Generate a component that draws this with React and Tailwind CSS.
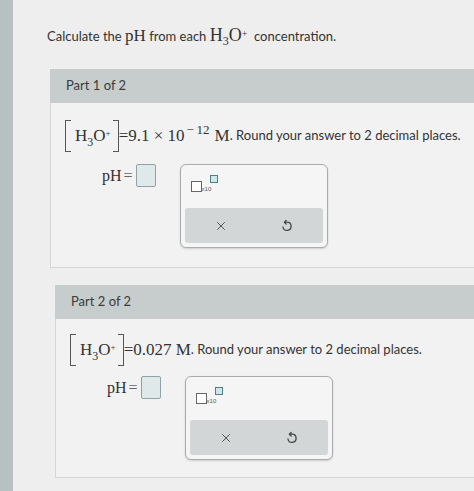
import React from 'react';
import { X } from 'lucide-react';

const serif = "font-['Liberation_Serif','Times_New_Roman',serif]";
const sans = "font-['Lato','Open_Sans',sans-serif]";

const Hydronium = () => (
  <span className="inline-flex items-center">
    <span className="inline-block h-[32px] w-[6px] border-y border-l border-[#555]" />
    <span className={`${serif} pl-[4px] pr-[2px] text-[17px] text-[#333]`}>
      H<sub className="relative -bottom-[5px] text-[12px]">3</sub>O<sup className="relative -top-[5px] text-[9px]">+</sup>
    </span>
    <span className="inline-block h-[32px] w-[6px] border-y border-r border-[#555]" />
  </span>
);

const UndoIcon = () => (
  <svg width="14" height="14" viewBox="0 0 24 24" fill="none" stroke="#444" strokeWidth="2.2" strokeLinecap="round" strokeLinejoin="round">
    <path d="M8 5.5h4a7 7 0 1 1-6.9 8.2" />
    <path d="M10.5 2.5 7.5 5.5l3 3" />
  </svg>
);

const AnswerTools = () => (
  <div className="w-[148px] rounded-[6px] border border-[#a9acac] bg-[#f5f5f5] px-[4px] pb-[4px] pt-[12px] shadow-[0_1px_2px_rgba(0,0,0,0.15)]">
    <div className="flex h-[31px] items-start pl-[6px]">
      <div className="mt-[4px] h-[11px] w-[11px] border border-[#666] bg-white" />
      <span className="mt-[9px] font-['Liberation_Sans',sans-serif] text-[6px] leading-none text-[#555]">x10</span>
      <div className="-ml-[1px] -mt-[2px] h-[8px] w-[8px] border border-[#4f7f86] bg-[#cfe6ea]" />
    </div>
    <div className="flex h-[35px] items-center justify-between rounded-[3px] bg-[#d3d6d6] px-[29px]">
      <X size={14} strokeWidth={1.5} className="text-[#444]" />
      <UndoIcon />
    </div>
  </div>
);

const Part = ({ label, indent, children, bodyHeight, eqTop, rowTop }) => (
  <section className={indent}>
    <div className={`flex h-[34px] items-center bg-[#c7cdcd] pl-[16px] ${sans} text-[13px] text-[#3a3a3a]`}>
      {label}
    </div>
    <div className={`${bodyHeight} border-b border-l border-[#d6d6d6] bg-[#f2f2f2] pl-[14px]`}>
      <div className={`${eqTop} flex items-center whitespace-nowrap ${sans} text-[13px] text-[#333]`}>
        {children}
      </div>
      <div className={`ml-[37px] ${rowTop} flex items-start`}>
        <div className={`${serif} flex h-[23px] items-center text-[16px] text-[#333]`}>
          pH<span className="ml-[2px] text-[#666]">=</span>
        </div>
        <div className="ml-[3px] h-[23px] w-[20px] rounded-[2px] border border-[#8fa3a6] bg-[#dfe9ea]" />
        <div className="ml-[24px]">
          <AnswerTools />
        </div>
      </div>
    </div>
  </section>
);

export default function App() {
  return (
    <div className="flex h-[491px] w-[474px] overflow-hidden bg-[#eeeeee]">
      <div className="w-[13px] shrink-0 bg-[#b7c1c1]" />
      <div className="flex-1 pt-[24px]">
        <p className={`ml-[34px] flex items-baseline whitespace-nowrap ${sans} text-[13px] leading-[22px] text-[#333]`}>
          Calculate the&nbsp;<span className={`${serif} text-[17px]`}>pH</span>&nbsp;from each&nbsp;
          <span className={`${serif} text-[18px]`}>
            H<sub className="relative -bottom-[4px] text-[12px]">3</sub>O<sup className="relative -top-[4px] text-[10px]">+</sup>
          </span>
          &nbsp;&nbsp;concentration.
        </p>
        <div className="mt-[22px]">
          <Part label="Part 1 of 2" indent="ml-[37px]" bodyHeight="h-[165px]" eqTop="pt-[17px]" rowTop="mt-[12px]">
            <Hydronium />
            <span className={`${serif} text-[17px]`}>
              =9.1 × 10<sup className="relative -top-[7px] ml-[2px] text-[13px]">−&thinsp;12</sup>
              <span className="ml-[5px]">M</span>
            </span>
            <span>. Round your answer to 2 decimal places.</span>
          </Part>
        </div>
        <div className="mt-[17px]">
          <Part label="Part 2 of 2" indent="ml-[42px]" bodyHeight="h-[159px]" eqTop="pt-[15px]" rowTop="mt-[10px]">
            <Hydronium />
            <span className={`${serif} text-[17px]`}>=0.027 M</span>
            <span>. Round your answer to 2 decimal places.</span>
          </Part>
        </div>
      </div>
    </div>
  );
}
